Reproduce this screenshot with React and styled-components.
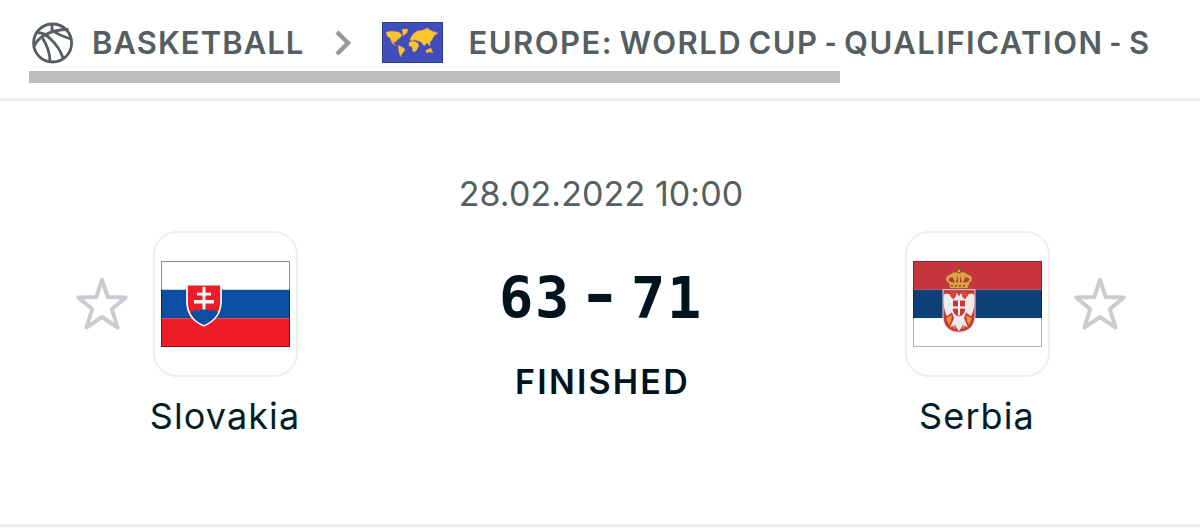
import React from 'react'
import styled, { createGlobalStyle } from 'styled-components'

const GlobalStyle = createGlobalStyle`
  * {
    box-sizing: border-box;
  }

  body {
    margin: 0;
    background: #fff;
    font-family: Inter, Roboto, sans-serif;
    color: #001e28;
  }
`

const Page = styled.div`
  height: 530px;
  overflow: hidden;
`

const Header = styled.header`
  height: 101px;
  padding-top: 21px;
  border-bottom: 3px solid #eee;
`

const Breadcrumbs = styled.nav`
  display: flex;
  align-items: center;
  height: 43px;
  padding-left: 32px;
  white-space: nowrap;
`

const Crumb = styled.span`
  margin-left: ${({gap}) => gap}px;
  font-size: 31px;
  font-weight: 600;
  line-height: 43px;
  letter-spacing: ${({spacing}) => spacing}px;
  word-spacing: -3px;
  color: #555e61;
`

const Hyphen = styled.span`
  font-family: Roboto, sans-serif;
`

const Chevron = styled.svg`
  flex: none;
  margin-left: 30px;
`

const WorldFlag = styled.svg`
  flex: none;
  margin-left: 30px;
`

const ScrollBar = styled.div`
  width: 811px;
  height: 12px;
  margin: 7px 0 0 29px;
  background: #bdbdbd;
`

const Match = styled.main`
  display: flex;
  justify-content: space-between;
  height: 426px;
  padding: 0 72px 0 74px;
  border-bottom: 3px solid #eee;
`

const Side = styled.section`
  display: flex;
  flex-direction: ${({reverse}) => reverse ? 'row-reverse' : 'row'};
  gap: 22px;
  padding-top: 130px;
`

const Star = styled.svg`
  margin-top: 45px;
`

const Team = styled.div`
  display: flex;
  flex-direction: column;
  align-items: center;
  width: 146px;
`

const Badge = styled.div`
  display: flex;
  align-items: center;
  justify-content: center;
  width: 145px;
  height: 146px;
  border: 2px solid #eee;
  border-radius: 24px;
`

const TeamName = styled.div`
  margin-top: 18px;
  font-size: 36px;
  line-height: 42px;
  letter-spacing: 1.1px;
  white-space: nowrap;
`

const Result = styled.section`
  display: flex;
  flex-direction: column;
  align-items: center;
  padding-top: 72px;
  white-space: nowrap;
`

const StartTime = styled.div`
  font-size: 34px;
  line-height: 42px;
  letter-spacing: .1px;
  color: #555e61;
`

const Score = styled.div`
  display: flex;
  gap: 12px;
  margin-top: 50px;
  font-family: 'DejaVu Sans Mono', monospace;
  font-size: 57px;
  font-weight: 700;
  line-height: 66px;
  letter-spacing: 1.7px;
  color: #00141e;
`

const Dash = styled.span`
  transform: translateY(-4px) scaleX(1.3);
`

const Status = styled.div`
  margin-top: 30px;
  padding-left: 3px;
  font-size: 34px;
  font-weight: 600;
  line-height: 42px;
  letter-spacing: 2.2px;
  color: #00141e;
`

const Basketball = () => (
  <svg width="42" height="42" viewBox="0 0 42 42" fill="none" stroke="#555e61" strokeWidth="2.8">
    <circle cx="20.6" cy="21" r="19"/>
    <path d="M5 10.500C11 10.500 14 12.500 18 16.500C24 22 28.500 28 31 36"/>
    <path d="M2.500 24C5 16.500 16 7.500 36.500 7.500"/>
    <path d="M10.500 16C15 23 18 30 18 39.500"/>
    <path d="M20 2.500V8C25 12 31 14.500 39 17"/>
  </svg>
)

const StarIcon = () => (
  <Star width="56" height="56" viewBox="0 0 56 56">
    <path
      d="M28 3.800L33.700 21L51.700 21.600L37.800 33L43.600 51.600L28 41L12.400 51.600L18.200 33L4.300 21.600L22.300 21Z"
      fill="none"
      stroke="#c8cdcf"
      strokeWidth="4"
      strokeLinejoin="round"
    />
  </Star>
)

const World = () => (
  <WorldFlag width="61" height="41" viewBox="0 0 61 41">
    <rect x=".5" y=".5" width="60" height="40" fill="#414dbb" stroke="#303a91"/>
    <g fill="#fdc42f" stroke="#b58b62" strokeWidth=".5">
      <path d="M4 10L10 9L17 10L20 13L18 16L15 18L14 20L11 20L14 24L10 21L8 16L5 14Z"/>
      <path d="M20 7L26 7L25 11L21 14Z"/>
      <path d="M16 23L22 26L23 28L20 32L19 35L17 31Z"/>
      <path d="M28 17L31 12L35 9L41 8L45 6L50 9L56 11L52 14L50 18L48 20L48 24L45 21L42 24L39 20L36 19L33 18L29 19Z"/>
      <path d="M27 20L32 19L36 21L37 24L34 29L31 30L30 25L27 24Z"/>
      <path d="M44 28L49 26L51 31L48 30L44 31Z"/>
    </g>
  </WorldFlag>
)

const SlovakFlag = () => (
  <svg width="129" height="86" viewBox="0 0 129 87" preserveAspectRatio="none">
    <path fill="#fff" d="M0 0H129V29H0Z"/>
    <path fill="#0b4ea2" d="M0 29H129V58H0Z"/>
    <path fill="#ee1c25" d="M0 58H129V87H0Z"/>
    <path d="M26 24H60V41C60 54 53 61 43 65.500C32 61 26 54 26 41Z" fill="#ee1c25" stroke="#fff" strokeWidth="1.700"/>
    <path d="M30 53C32 49 36 49 38 51C40 47 46 47 48 51C50 49 54 49 57 52C53 59 49 62 43 64.500C37 62 33 59 30 53Z" fill="#0b4ea2"/>
    <path d="M41.500 26H44.500V32H50V35H44.500V39.500H53V43H44.500V49H41.500V43H33V39.500H41.500V35H36V32H41.500Z" fill="#fff"/>
    <rect x=".5" y=".5" width="128" height="86" fill="none" stroke="#000" strokeOpacity=".45"/>
  </svg>
)

const SerbianFlag = () => (
  <svg width="129" height="86" viewBox="0 0 129 87" preserveAspectRatio="none">
    <path fill="#c6363c" d="M0 0H129V29H0Z"/>
    <path fill="#0c4076" d="M0 29H129V58H0Z"/>
    <path fill="#fff" d="M0 58H129V87H0Z"/>
    <path d="M30 29H62V55C62 66 55 72 46 72C36 72 30 66 30 55Z" fill="#c6363c" stroke="#eed9dc"/>
    <g fill="#d9a441" stroke="#7e3527" strokeWidth=".7">
      <path d="M37 28L35 22C31 20 32 14 38 13C41 10 44 11 46 12C48 11 51 10 54 13C60 14 61 20 57 22L55 28Z"/>
      <circle cx="46" cy="10" r="2"/>
    </g>
    <path d="M37 21C34 18 37 16 40 17L42 22ZM55 21C58 18 55 16 52 17L50 22ZM43 21L45 15V22ZM49 21L47 15V22Z" fill="#b93639"/>
    <path d="M38 25H54" stroke="#a64332" strokeWidth="1.500" strokeDasharray="2 2"/>
    <path d="M31 34C35 31 38 34 40 38L44 32L46 36L48 32L52 38C54 34 57 31 61 34C62 43 61 51 58 56L53 52L51 58L55 67L50 65L46 71L42 65L37 67L41 58L39 52L34 56C31 51 30 43 31 34Z" fill="#eeeaee"/>
    <path d="M38 31L44 31L43 36L40 39L37 35ZM54 31L48 31L49 36L52 39L55 35Z" fill="#d04b3d"/>
    <path d="M40 40H52V50C51 54 49 55 46 56C43 55 41 54 40 50Z" fill="#c6363c"/>
    <path d="M46 40V55M40 47H52" stroke="#fff" strokeWidth="2"/>
    <path d="M33 58L39 55L38 61L36 65ZM59 58L53 55L54 61L56 65ZM40 66L43 64L42 70ZM52 66L49 64L50 70Z" fill="#e4992f"/>
    <rect x=".5" y=".5" width="128" height="86" fill="none" stroke="#000" strokeOpacity=".3"/>
  </svg>
)

const App = () => (
  <Page>
    <GlobalStyle/>
    <Header>
      <Breadcrumbs>
        <Basketball/>
        <Crumb gap={18} spacing={1.05}>BASKETBALL</Crumb>
        <Chevron width="18" height="26" viewBox="0 0 18 26">
          <path d="M3 2L14 13L3 24" fill="none" stroke="#999" strokeWidth="4.500"/>
        </Chevron>
        <World/>
        <Crumb gap={25} spacing={1.5}>
          EUROPE: WORLD CUP <Hyphen>-</Hyphen> QUALIFICATION <Hyphen>-</Hyphen> S
        </Crumb>
      </Breadcrumbs>
      <ScrollBar/>
    </Header>
    <Match>
      <Side>
        <StarIcon/>
        <Team>
          <Badge><SlovakFlag/></Badge>
          <TeamName>Slovakia</TeamName>
        </Team>
      </Side>
      <Result>
        <StartTime>28.02.2022 10:00</StartTime>
        <Score>
          <span>63</span>
          <Dash>-</Dash>
          <span>71</span>
        </Score>
        <Status>FINISHED</Status>
      </Result>
      <Side reverse>
        <StarIcon/>
        <Team>
          <Badge><SerbianFlag/></Badge>
          <TeamName>Serbia</TeamName>
        </Team>
      </Side>
    </Match>
  </Page>
)

export default App
